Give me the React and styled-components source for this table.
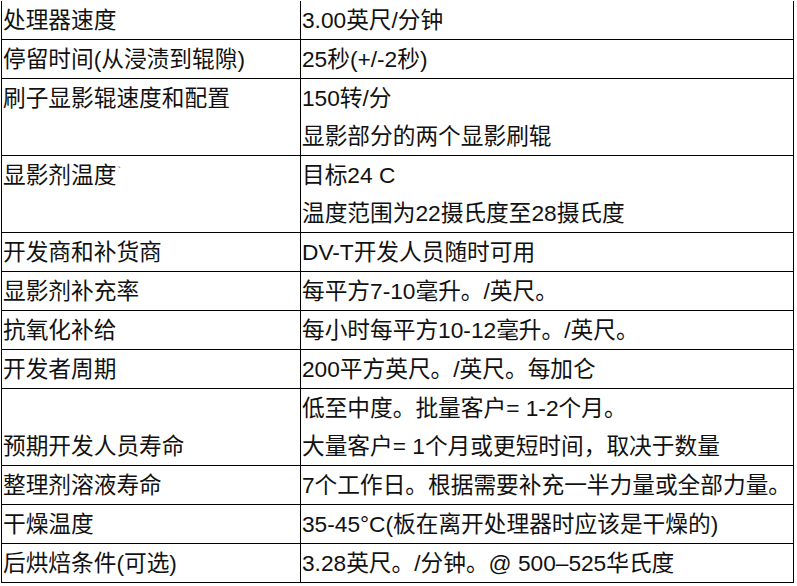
import React from "react";
import styled, { createGlobalStyle } from "styled-components";

const GlobalStyle = createGlobalStyle`
  html, body {
    margin: 0;
    padding: 0;
    background: #fff;
  }
  body {
    font-family: "Liberation Sans", "Noto Sans CJK SC", sans-serif;
    color: #111;
  }
`;

const Wrapper = styled.div`
  padding: 1px 0 0 1px;
`;

const Table = styled.div`
  display: grid;
  grid-template-columns: 299px 493px;
  width: 793px;
  border-left: 1px solid #000;
`;

const Cell = styled.div`
  border-right: 1px solid #000;
  border-bottom: 1px solid #000;
  padding-left: 1px;
  font-size: 22.7px;
  white-space: nowrap;
  overflow: hidden;
`;

const Line = styled.div`
  height: 38px;
  line-height: 38px;
`;

const Mark = styled.span`
  font-size: 11px;
  line-height: 0;
  color: #555;
  vertical-align: 8px;
  margin-left: 1px;
`;

const rows = [
  { label: ["处理器速度"], value: ["3.00英尺/分钟"] },
  { label: ["停留时间(从浸渍到辊隙)"], value: ["25秒(+/-2秒)"] },
  { label: ["刷子显影辊速度和配置"], value: ["150转/分", "显影部分的两个显影刷辊"] },
  { label: ["显影剂温度"], mark: true, value: ["目标24 C", "温度范围为22摄氏度至28摄氏度"] },
  { label: ["开发商和补货商"], value: ["DV-T开发人员随时可用"] },
  { label: ["显影剂补充率"], value: ["每平方7-10毫升。/英尺。"] },
  { label: ["抗氧化补给"], value: ["每小时每平方10-12毫升。/英尺。"] },
  { label: ["开发者周期"], value: ["200平方英尺。/英尺。每加仑"] },
  {
    label: ["", "预期开发人员寿命"],
    value: ["低至中度。批量客户= 1-2个月。", "大量客户= 1个月或更短时间，取决于数量"],
  },
  { label: ["整理剂溶液寿命"], value: ["7个工作日。根据需要补充一半力量或全部力量。"] },
  { label: ["干燥温度"], value: ["35-45°C(板在离开处理器时应该是干燥的)"] },
  { label: ["后烘焙条件(可选)"], value: ["3.28英尺。/分钟。@ 500–525华氏度"] },
];

const App = () => {
  return (
    <Wrapper>
      <GlobalStyle />
      <Table>
        {rows.map((row, index) => (
          <React.Fragment key={index}>
            <Cell>
              {row.label.map((text, i) => (
                <Line key={i}>
                  {text}
                  {row.mark && <Mark>`</Mark>}
                </Line>
              ))}
            </Cell>
            <Cell>
              {row.value.map((text, i) => (
                <Line key={i}>{text}</Line>
              ))}
            </Cell>
          </React.Fragment>
        ))}
      </Table>
    </Wrapper>
  );
};

export default App;
